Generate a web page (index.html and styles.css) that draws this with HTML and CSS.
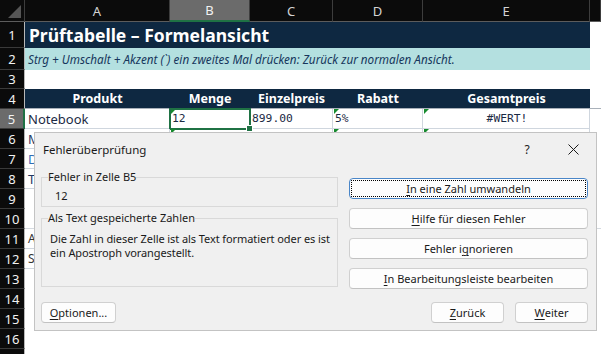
FILE: index.html
```html
<!DOCTYPE html>
<html lang="de">
<head>
    <meta charset="UTF-8">
    <meta name="viewport" content="width=device-width, initial-scale=1.0">
    <title>Prüftabelle – Formelansicht</title>
    <link rel="stylesheet" href="styles.css">
</head>
<body>
    <div class="sheet">
        <!-- column headers -->
        <div class="corner"><span class="corner-tri"></span></div>
        <div class="colhead">A</div>
        <div class="colhead selected">B</div>
        <div class="colhead">C</div>
        <div class="colhead">D</div>
        <div class="colhead">E</div>
        <div class="colhead"></div>

        <!-- row 1 -->
        <div class="rowhead r1">1</div>
        <div class="title">Prüftabelle – Formelansicht</div>
        <div class="cell"></div>

        <!-- row 2 -->
        <div class="rowhead">2</div>
        <div class="hint">Strg + Umschalt + Akzent (`) ein zweites Mal drücken: Zurück zur normalen Ansicht.</div>
        <div class="cell"></div>

        <!-- row 3 -->
        <div class="rowhead">3</div>
        <div class="cell span5"></div>
        <div class="cell"></div>

        <!-- row 4 -->
        <div class="rowhead">4</div>
        <div class="th">Produkt</div>
        <div class="th">Menge</div>
        <div class="th">Einzelpreis</div>
        <div class="th">Rabatt</div>
        <div class="th">Gesamtpreis</div>
        <div class="cell"></div>

        <!-- row 5 -->
        <div class="rowhead active">5</div>
        <div class="td">Notebook</div>
        <div class="td mono err active-cell">12<span class="fill-handle"></span></div>
        <div class="td mono">899.00</div>
        <div class="td mono err">5%</div>
        <div class="td mono err center">#WERT!</div>
        <div class="cell after-table"></div>

        <!-- row 6 -->
        <div class="rowhead">6</div>
        <div class="td navy">Maus</div>
        <div class="td err"></div>
        <div class="td"></div>
        <div class="td err"></div>
        <div class="td err"></div>
        <div class="cell"></div>

        <!-- row 7 -->
        <div class="rowhead">7</div>
        <div class="td blue">Drucker</div>
        <div class="td"></div>
        <div class="td"></div>
        <div class="td"></div>
        <div class="td"></div>
        <div class="cell"></div>

        <!-- row 8 -->
        <div class="rowhead">8</div>
        <div class="td navy">Tastatur</div>
        <div class="td"></div>
        <div class="td"></div>
        <div class="td"></div>
        <div class="td"></div>
        <div class="cell"></div>

        <div class="rowhead">9</div>
        <div class="cell span6"></div>
        <div class="rowhead">10</div>
        <div class="cell span6 line"></div>

        <!-- row 11, 12 -->
        <div class="rowhead">11</div>
        <div class="td note">Anmerkung: Formeln werden angezeigt.</div>
        <div class="cell"></div>
        <div class="rowhead">12</div>
        <div class="td note">Summe wird nicht berechnet.</div>
        <div class="cell"></div>

        <div class="rowhead">13</div>
        <div class="cell span6"></div>
        <div class="rowhead">14</div>
        <div class="cell span6"></div>
        <div class="rowhead">15</div>
        <div class="cell span6"></div>
        <div class="rowhead">16</div>
        <div class="cell span6"></div>
        <div class="rowhead">17</div>
        <div class="cell span6"></div>
    </div>

    <div class="dialog">
        <div class="dlg-title">
            <span class="dlg-caption">Fehlerüberprüfung</span>
            <span class="dlg-help">?</span>
            <span class="dlg-close">
                <svg width="11" height="11" viewBox="0 0 11 11"><path d="M0.5 0.5 L10.5 10.5 M10.5 0.5 L0.5 10.5" stroke="#1a1a1a" stroke-width="1" fill="none"/></svg>
            </span>
        </div>
        <div class="dlg-body">
            <div class="dlg-left">
                <fieldset class="group group-cell">
                    <legend>Fehler in Zelle B5</legend>
                    <div class="cell-value">12</div>
                </fieldset>
                <fieldset class="group group-desc">
                    <legend>Als Text gespeicherte Zahlen</legend>
                    <p>Die Zahl in dieser Zelle ist als Text formatiert oder es ist ein Apostroph vorangestellt.</p>
                </fieldset>
            </div>
            <div class="dlg-actions">
                <button class="btn focused"><span class="focus-ring"><u>I</u>n eine Zahl umwandeln</span></button>
                <button class="btn"><u>H</u>ilfe für diesen Fehler</button>
                <button class="btn">Fehler i<u>g</u>norieren</button>
                <button class="btn"><u>I</u>n Bearbeitungsleiste bearbeiten</button>
            </div>
        </div>
        <div class="dlg-footer">
            <button class="btn small wide"><u>O</u>ptionen...</button>
            <span class="spacer"></span>
            <button class="btn small"><u>Z</u>urück</button>
            <button class="btn small"><u>W</u>eiter</button>
        </div>
    </div>
</body>
</html>
```

FILE: styles.css
```css
body {
    margin: 0;
    width: 601px;
    height: 354px;
    overflow: hidden;
    background: #ffffff;
    position: relative;
    font-family: "Noto Sans", "Open Sans", sans-serif;
}

/* ---- worksheet ---- */

.sheet {
    display: grid;
    grid-template-columns: 25px 145px 80px 83px 90px 167px 1fr;
    grid-template-rows: 22px 26px 22px 19px 20px repeat(12, 20px);
}

.corner {
    background: #0b0b0b;
    border-right: 1px solid #3d3d3d;
    border-bottom: 1px solid #5c5c5c;
    position: relative;
}

.corner-tri {
    position: absolute;
    right: 3px;
    bottom: 3px;
    width: 0;
    height: 0;
    border-left: 13px solid transparent;
    border-bottom: 13px solid #555555;
}

.colhead {
    background: #0b0b0b;
    color: #d4d4d4;
    font-size: 13px;
    display: flex;
    align-items: center;
    justify-content: center;
    border-right: 1px solid #3d3d3d;
    border-bottom: 1px solid #5c5c5c;
}

.colhead.selected {
    background: #6b6b6b;
    color: #f2f2f2;
    border-bottom: 2px solid #1f7244;
}

.rowhead {
    background: #0b0b0b;
    color: #f2f2f2;
    font-size: 13px;
    display: flex;
    align-items: center;
    justify-content: center;
    border-bottom: 1px solid #3a3a3a;
    border-right: 1px solid #b8b8b8;
}

.rowhead.active {
    background: #6b6b6b;
    border-right: 2px solid #1f7244;
}

.cell {
    background: #ffffff;
}

.span5 {
    grid-column: span 5;
}

.span6 {
    grid-column: span 6;
}

.cell.line {
    border-bottom: 1px solid #d5dae0;
}

.title {
    grid-column: span 5;
    background: #0e2841;
    color: #ffffff;
    font-weight: 700;
    font-size: 17.5px;
    display: flex;
    align-items: center;
    padding-left: 4px;
}

.hint {
    grid-column: span 5;
    background: #b4e0e0;
    color: #16365c;
    font-style: italic;
    font-size: 11.7px;
    display: flex;
    align-items: center;
    padding-left: 3px;
    white-space: nowrap;
}

.th {
    background: #0e2841;
    color: #ffffff;
    font-weight: 700;
    font-size: 12.5px;
    display: flex;
    align-items: center;
    justify-content: center;
    border-bottom: 1px solid #a9b1ba;
}

.td {
    position: relative;
    color: #1b2a44;
    font-size: 13px;
    display: flex;
    align-items: center;
    padding-left: 3px;
    border-right: 1px solid #cfd6de;
    border-bottom: 1px solid #cfd6de;
    white-space: nowrap;
    overflow: hidden;
}

.td.mono {
    font-family: "DejaVu Sans Mono", "Liberation Mono", monospace;
    font-size: 11.3px;
    padding-left: 2px;
}

.td.center {
    justify-content: center;
}

.td.navy {
    color: #1f3864;
}

.td.blue {
    color: #2f6db5;
}

.td.note {
    grid-column: span 5;
    color: #333333;
    font-size: 12px;
    border-right: none;
}

.after-table {
    border-top: 1px solid #a9b1ba;
    margin-top: -1px;
}

/* green error markers */
.err::before {
    content: "";
    position: absolute;
    left: 1px;
    top: 0;
    width: 0;
    height: 0;
    border-top: 5px solid #168a2e;
    border-right: 5px solid transparent;
}

.active-cell {
    overflow: visible;
    padding-left: 4px;
}

.active-cell::after {
    content: "";
    position: absolute;
    left: -1px;
    top: -1px;
    right: -2px;
    bottom: -2px;
    border: 2px solid #1f7244;
}

.fill-handle {
    position: absolute;
    right: -4px;
    bottom: -4px;
    width: 5px;
    height: 5px;
    background: #1f7244;
    border: 1px solid #ffffff;
    z-index: 1;
}

/* ---- dialog ---- */

.dialog {
    position: absolute;
    left: 34px;
    top: 132px;
    width: 561px;
    height: 197px;
    background: #f0f0f0;
    border: 1px solid #c3c3c3;
    color: #1a1a1a;
    font-size: 11px;
    display: flex;
    flex-direction: column;
}

.dlg-title {
    height: 32px;
    display: flex;
    align-items: center;
    padding-left: 8px;
}

.dlg-caption {
    flex: 1;
    font-size: 11.5px;
}

.dlg-help {
    width: 46px;
    text-align: center;
    font-size: 12px;
}

.dlg-close {
    width: 46px;
    display: flex;
    justify-content: center;
}

.dlg-body {
    display: flex;
    gap: 11px;
    padding: 5px 8px 0 6px;
}

.dlg-left {
    width: 297px;
    display: flex;
    flex-direction: column;
    gap: 4px;
}

.group {
    margin: 0;
    padding: 0 0 2px 6px;
    border: 1px solid #d9d9d9;
}

.group legend {
    padding: 0;
    line-height: 14px;
    font-size: 11px;
}

.cell-value {
    line-height: 16px;
    padding: 4px 0 0 7px;
}

.group-desc p {
    margin: 0;
    padding: 7px 0 24px 2px;
    line-height: 14px;
    letter-spacing: -0.08px;
}

.dlg-actions {
    width: 239px;
    display: flex;
    flex-direction: column;
    gap: 9px;
    padding-top: 8px;
}

.btn {
    height: 21px;
    background: #fdfdfd;
    border: 1px solid #d0d0d0;
    border-bottom-color: #c2c2c2;
    border-radius: 4px;
    font-family: "Noto Sans", "Open Sans", sans-serif;
    font-size: 11px;
    color: #1a1a1a;
    padding: 0;
    display: flex;
    align-items: center;
    justify-content: center;
}

.btn u {
    text-underline-offset: 2px;
}

.btn.focused {
    border: 1px solid #4a86c8;
    padding: 1px;
}

.focus-ring {
    flex: 1;
    align-self: stretch;
    display: flex;
    align-items: center;
    justify-content: center;
    border: 1px dotted #000000;
    border-radius: 1px;
}

.dlg-footer {
    display: flex;
    gap: 11px;
    padding: 13px 8px 0 6px;
}

.spacer {
    flex: 1;
}

.btn.small {
    width: 73px;
}

.btn.wide {
    width: 75px;
}
```
